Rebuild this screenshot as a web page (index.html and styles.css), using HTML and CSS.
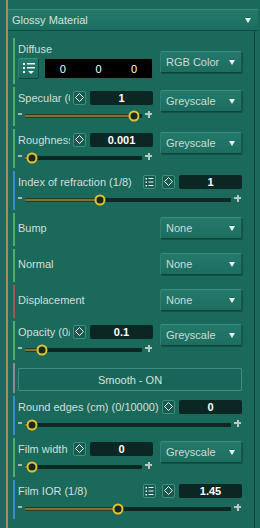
FILE: index.html
```html
<!DOCTYPE html>
<html lang="en">
<head>
    <meta charset="UTF-8">
    <meta name="viewport" content="width=device-width, initial-scale=1.0">
    <title>Glossy Material</title>
    <link rel="stylesheet" href="styles.css">
</head>
<body>
    <div class="panel">
        <div class="header">
            <span>Glossy Material</span>
            <span class="caret"></span>
        </div>

        <div class="content">
            <!-- Diffuse -->
            <div class="row green diffuse">
                <div class="col">
                    <div class="line"><span class="label">Diffuse</span></div>
                    <div class="rgb-line">
                        <div class="list-btn big">
                            <svg width="19" height="19" viewBox="0 0 19 19">
                                <g fill="#eef4f1">
                                    <rect x="4" y="4" width="2" height="2"/>
                                    <rect x="4" y="8" width="2" height="2"/>
                                    <rect x="4" y="12" width="2" height="2"/>
                                    <rect x="8" y="4" width="8" height="1.5"/>
                                    <rect x="8" y="8" width="8" height="1.5"/>
                                    <path d="M9 12 L15 12 L12 15 Z"/>
                                </g>
                            </svg>
                        </div>
                        <div class="rgb-values"><span>0</span><span>0</span><span>0</span></div>
                    </div>
                </div>
                <div class="select">RGB Color<span class="caret"></span></div>
            </div>

            <!-- Specular -->
            <div class="row green slider-row">
                <div class="col">
                    <div class="line">
                        <span class="label">Specular (0/1)</span>
                        <span class="key-btn"><svg width="11" height="12" viewBox="0 0 11 12"><path d="M5.5 1.5 L9.5 5.5 L5.5 9.5 L1.5 5.5 Z" fill="none" stroke="#eef4f1"/></svg></span>
                        <span class="value">1</span>
                    </div>
                    <div class="slider">
                        <span class="minus"></span>
                        <div class="track" style="--v: 1"><span class="fill"></span><span class="knob"></span></div>
                        <span class="plus"></span>
                    </div>
                </div>
                <div class="select">Greyscale<span class="caret"></span></div>
            </div>

            <!-- Roughness -->
            <div class="row green slider-row">
                <div class="col">
                    <div class="line">
                        <span class="label">Roughness</span>
                        <span class="key-btn"><svg width="11" height="12" viewBox="0 0 11 12"><path d="M5.5 1.5 L9.5 5.5 L5.5 9.5 L1.5 5.5 Z" fill="none" stroke="#eef4f1"/></svg></span>
                        <span class="value">0.001</span>
                    </div>
                    <div class="slider">
                        <span class="minus"></span>
                        <div class="track" style="--v: 0.001"><span class="fill"></span><span class="knob"></span></div>
                        <span class="plus"></span>
                    </div>
                </div>
                <div class="select">Greyscale<span class="caret"></span></div>
            </div>

            <!-- Index of refraction -->
            <div class="row blue slider-row wide">
                <div class="col">
                    <div class="line">
                        <span class="label">Index of refraction (1/8)</span>
                        <span class="key-btn list"><svg width="11" height="12" viewBox="0 0 11 12"><g fill="#eef4f1"><rect x="1.5" y="2" width="1.5" height="1.5"/><rect x="1.5" y="5.5" width="1.5" height="1.5"/><rect x="1.5" y="9" width="1.5" height="1.5"/><rect x="4.5" y="2" width="5" height="1"/><rect x="4.5" y="5.5" width="5" height="1"/><rect x="4.5" y="9" width="5" height="1"/></g></svg></span>
                        <span class="key-btn"><svg width="11" height="12" viewBox="0 0 11 12"><path d="M5.5 1.5 L9.5 5.5 L5.5 9.5 L1.5 5.5 Z" fill="none" stroke="#eef4f1"/></svg></span>
                        <span class="value">1</span>
                    </div>
                    <div class="slider">
                        <span class="minus"></span>
                        <div class="track" style="--v: 0.355"><span class="fill"></span><span class="knob"></span></div>
                        <span class="plus"></span>
                    </div>
                </div>
            </div>

            <!-- Bump / Normal / Displacement -->
            <div class="row green simple">
                <div class="col"><span class="label">Bump</span></div>
                <div class="select">None<span class="caret"></span></div>
            </div>
            <div class="row green simple">
                <div class="col"><span class="label">Normal</span></div>
                <div class="select">None<span class="caret"></span></div>
            </div>
            <div class="row red simple">
                <div class="col"><span class="label">Displacement</span></div>
                <div class="select">None<span class="caret"></span></div>
            </div>

            <!-- Opacity -->
            <div class="row green slider-row">
                <div class="col">
                    <div class="line">
                        <span class="label">Opacity (0/1)</span>
                        <span class="key-btn"><svg width="11" height="12" viewBox="0 0 11 12"><path d="M5.5 1.5 L9.5 5.5 L5.5 9.5 L1.5 5.5 Z" fill="none" stroke="#eef4f1"/></svg></span>
                        <span class="value">0.1</span>
                    </div>
                    <div class="slider">
                        <span class="minus"></span>
                        <div class="track" style="--v: 0.1"><span class="fill"></span><span class="knob"></span></div>
                        <span class="plus"></span>
                    </div>
                </div>
                <div class="select">Greyscale<span class="caret"></span></div>
            </div>

            <!-- Smooth -->
            <div class="row grey smooth">
                <div class="toggle">Smooth - ON</div>
            </div>

            <!-- Round edges -->
            <div class="row blue slider-row wide">
                <div class="col">
                    <div class="line">
                        <span class="label">Round edges (cm) (0/10000)</span>
                        <span class="key-btn"><svg width="11" height="12" viewBox="0 0 11 12"><path d="M5.5 1.5 L9.5 5.5 L5.5 9.5 L1.5 5.5 Z" fill="none" stroke="#eef4f1"/></svg></span>
                        <span class="value">0</span>
                    </div>
                    <div class="slider">
                        <span class="minus"></span>
                        <div class="track" style="--v: 0"><span class="fill"></span><span class="knob"></span></div>
                        <span class="plus"></span>
                    </div>
                </div>
            </div>

            <!-- Film width -->
            <div class="row green slider-row">
                <div class="col">
                    <div class="line">
                        <span class="label">Film width</span>
                        <span class="key-btn"><svg width="11" height="12" viewBox="0 0 11 12"><path d="M5.5 1.5 L9.5 5.5 L5.5 9.5 L1.5 5.5 Z" fill="none" stroke="#eef4f1"/></svg></span>
                        <span class="value">0</span>
                    </div>
                    <div class="slider">
                        <span class="minus"></span>
                        <div class="track" style="--v: 0"><span class="fill"></span><span class="knob"></span></div>
                        <span class="plus"></span>
                    </div>
                </div>
                <div class="select">Greyscale<span class="caret"></span></div>
            </div>

            <!-- Film IOR -->
            <div class="row blue slider-row wide">
                <div class="col">
                    <div class="line">
                        <span class="label">Film IOR (1/8)</span>
                        <span class="key-btn list"><svg width="11" height="12" viewBox="0 0 11 12"><g fill="#eef4f1"><rect x="1.5" y="2" width="1.5" height="1.5"/><rect x="1.5" y="5.5" width="1.5" height="1.5"/><rect x="1.5" y="9" width="1.5" height="1.5"/><rect x="4.5" y="2" width="5" height="1"/><rect x="4.5" y="5.5" width="5" height="1"/><rect x="4.5" y="9" width="5" height="1"/></g></svg></span>
                        <span class="key-btn"><svg width="11" height="12" viewBox="0 0 11 12"><path d="M5.5 1.5 L9.5 5.5 L5.5 9.5 L1.5 5.5 Z" fill="none" stroke="#eef4f1"/></svg></span>
                        <span class="value">1.45</span>
                    </div>
                    <div class="slider">
                        <span class="minus"></span>
                        <div class="track" style="--v: 0.45"><span class="fill"></span><span class="knob"></span></div>
                        <span class="plus"></span>
                    </div>
                </div>
            </div>
        </div>
    </div>
</body>
</html>
```

FILE: styles.css
```css
/* Global */
body {
    margin: 0;
    background: #1a695b;
    font-family: "Liberation Sans", Arial, sans-serif;
    font-size: 11px;
    color: #d3dfda;
    overflow: hidden;
}

.panel {
    height: 528px;
    box-sizing: border-box;
    margin-left: 6px;
    padding-top: 9px;
    border-left: 2px solid #a48e5b;
}

/* Header */
.header {
    width: 250px;
    height: 22px;
    box-sizing: border-box;
    display: flex;
    align-items: center;
    justify-content: space-between;
    padding: 0 7px 0 4px;
    background: linear-gradient(#24796a, #1c6d5f);
    border-top: 1px solid #3a8d7e;
    border-bottom: 1px solid #0f4d42;
    color: #d6e2dd;
}

.caret {
    width: 0;
    height: 0;
    border-left: 3.5px solid transparent;
    border-right: 3.5px solid transparent;
    border-top: 5px solid #e9f0ed;
}

/* Content column */
.content {
    width: 247px;
    height: 497px;
    box-sizing: border-box;
    padding: 7px 12px 0 5px;
    border-right: 1px solid #0d4338;
}

.row {
    display: flex;
    gap: 7px;
    box-sizing: border-box;
    padding-left: 3px;
    margin-bottom: 3px;
    border-left: 2px solid #4daf6b;
}

.row.green { border-left-color: #4daf6b; }
.row.blue { border-left-color: #3a8ccc; }
.row.red { border-left-color: #a35454; }
.row.grey { border-left-color: #8e8b9a; }

.col {
    width: 135px;
    display: flex;
    flex-direction: column;
}

.line {
    height: 15px;
    display: flex;
    align-items: center;
}

.label {
    white-space: nowrap;
}

.line .label {
    flex: 1;
    min-width: 0;
    overflow: hidden;
    margin-right: 3px;
}

/* Dropdowns */
.select {
    width: 82px;
    height: 22px;
    box-sizing: border-box;
    display: flex;
    align-items: center;
    justify-content: space-between;
    padding: 0 6px 0 5px;
    background: linear-gradient(#24796a, #1c6d5f);
    border: 1px solid;
    border-color: #3b8d7e #145a4e #0d443a #2f8072;
    border-radius: 2px;
    box-shadow: 1px 1px 0 #145246;
    color: #cbdcd6;
}

/* Diffuse */
.diffuse {
    height: 46px;
    padding-top: 3px;
}

.diffuse .select {
    margin-top: 10px;
}

.rgb-line {
    display: flex;
    gap: 5px;
    margin-top: 2px;
    height: 21px;
}

.list-btn.big {
    width: 21px;
    height: 21px;
    box-sizing: border-box;
    display: flex;
    align-items: center;
    justify-content: center;
    background: linear-gradient(#247a6b, #1b6b5e);
    border: 1px solid;
    border-color: #3b8d7e #0f4a40 #0d443a #2f8072;
    border-radius: 2px;
}

.rgb-values {
    flex: 1;
    display: flex;
    background: #000;
    border: 1px solid #2a5f55;
    border-radius: 2px;
    color: #fff;
}

.rgb-values span {
    flex: 1;
    display: flex;
    align-items: center;
    justify-content: center;
}

/* Slider rows */
.slider-row {
    height: 39px;
    padding-top: 3px;
}

.slider-row.wide .col {
    width: 224px;
}

.key-btn {
    width: 13px;
    height: 14px;
    box-sizing: border-box;
    display: flex;
    align-items: center;
    justify-content: center;
    background: #175b4f;
    border: 1px solid #3f8e80;
    border-radius: 2px;
    margin-right: 4px;
}

.key-btn.list {
    margin-right: 6px;
}

.value {
    width: 63px;
    height: 14px;
    display: flex;
    align-items: center;
    justify-content: center;
    background: #0b2723;
    border-radius: 2px;
    color: #fff;
    font-weight: bold;
}

.slider {
    display: flex;
    align-items: center;
    height: 11px;
    margin-top: 5px;
}

.minus {
    width: 4px;
    height: 2px;
    margin: -3px 3px 0 0;
    background: #a9bab4;
}

.track {
    flex: 1;
    height: 4px;
    position: relative;
    background: #0b2824;
    border-radius: 1px;
}

.fill {
    position: absolute;
    left: 0;
    top: 0;
    bottom: 0;
    width: calc(7px + var(--v) * (100% - 15px));
    background: #7d7434;
    box-shadow: inset 0 1px 0 #2e3b1e, inset 0 -1px 0 #2e3b1e;
}

.knob {
    position: absolute;
    top: 50%;
    left: calc(7px + var(--v) * (100% - 15px));
    width: 11px;
    height: 11px;
    box-sizing: border-box;
    border: 2px solid #e6c22f;
    border-radius: 50%;
    background: #16291e;
    transform: translate(-50%, -50%);
}

.plus {
    width: 7px;
    height: 7px;
    margin: -3px 1px 0 3px;
    background:
        linear-gradient(#b8c8c2, #b8c8c2) center / 7px 2px no-repeat,
        linear-gradient(#b8c8c2, #b8c8c2) center / 2px 7px no-repeat;
}

/* Simple rows */
.simple {
    height: 33px;
    padding-top: 4px;
}

.simple .col {
    height: 22px;
    justify-content: center;
}

/* Smooth toggle */
.smooth {
    height: 30px;
    padding-top: 5px;
}

.toggle {
    width: 224px;
    height: 23px;
    box-sizing: border-box;
    display: flex;
    align-items: center;
    justify-content: center;
    background: #18665a;
    border: 1px solid #3f8f81;
    border-radius: 1px;
    color: #d6e2dd;
}
```
